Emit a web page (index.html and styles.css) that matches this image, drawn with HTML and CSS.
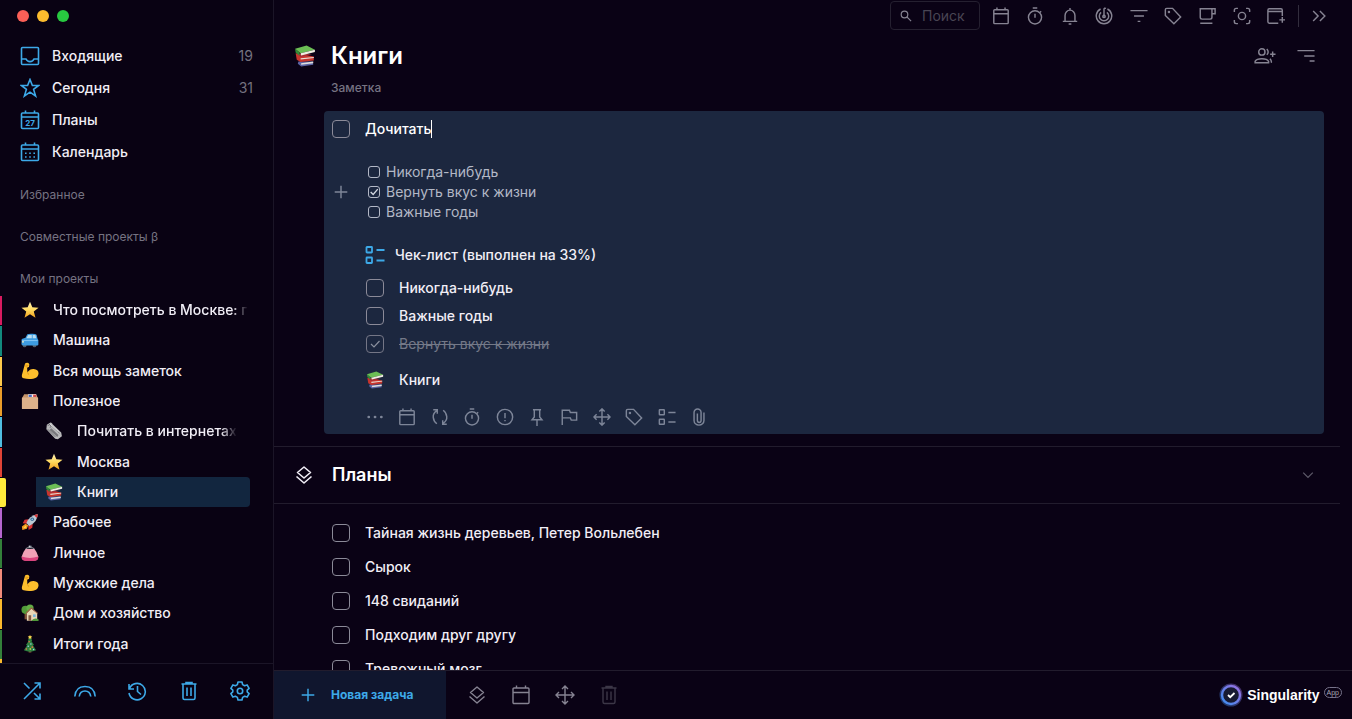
FILE: index.html
```html
<!DOCTYPE html>
<html lang="ru">
<head>
<meta charset="utf-8">
<title>Книги — Singularity</title>
<link rel="stylesheet" href="styles.css">
</head>
<body>
<svg class="sprite" aria-hidden="true">
  <defs>
    <linearGradient id="ring" x1="1" y1="0" x2="0" y2="1"><stop offset="0" stop-color="#9b6fe0"/><stop offset="1" stop-color="#3b8df0"/></linearGradient>
    <linearGradient id="gold" x1="0" y1="0" x2="0" y2="1"><stop offset="0" stop-color="#fff2b8"/><stop offset="0.5" stop-color="#ffd95e"/><stop offset="1" stop-color="#f2a01c"/></linearGradient>
  </defs>
  <symbol id="inbox" viewBox="0 0 20 20"><rect x="1.500" y="1.500" width="17" height="17" rx="1"/><path d="M1.500 13H6q1 2.600 4 2.600T14 13h4.500"/></symbol>
  <symbol id="star" viewBox="0 0 20 20"><path d="M10 1.500l2.400 6h6.200l-5 3.900 2 6.600-5.600-3.900L4.400 18l2-6.600-5-3.900h6.200z"/></symbol>
  <symbol id="month" viewBox="0 0 20 20"><rect x="1.500" y="3" width="17" height="15.500" rx="1"/><path d="M1.500 7h17M5.500.500V3M14.500.500V3"/><path stroke-dasharray="1.600 2.600" d="M5 11.300h11M5 15h11"/></symbol>
  <symbol id="calendar" viewBox="0 0 20 20"><rect x="2" y="3" width="16" height="15.500" rx="1"/><path d="M2 7.500h16M5.500.500V3M14.500.500V3"/></symbol>
  <symbol id="shuffle" viewBox="0 0 20 20"><path d="M2 18L18 2M12.500 2H18v5.500M2 2l5.500 5.500M12 12l6 6M12.500 18H18v-5.500"/></symbol>
  <symbol id="rainbow" viewBox="0 0 22 20"><path d="M.8 15.500C1.300 9 5 5.500 11 5.500s9.700 3.500 10.200 10M5.200 15.500c.5-3.500 2.500-5.500 5.800-5.500s5.300 2 5.800 5.500"/></symbol>
  <symbol id="history" viewBox="0 0 20 20"><path d="M2 3v5h5M2.500 7.500A8.200 8.200 0 1 1 2 12M10.500 5v5.500l3.500 3"/></symbol>
  <symbol id="trash" viewBox="0 0 20 20"><path d="M2.500 3h15M7 3V1.500h6V3M4 3v14q0 1.500 1.500 1.500h9q1.500 0 1.500-1.500V3M8 6.500v8.500M12 6.500v8.500"/></symbol>
  <symbol id="gear" viewBox="0 0 20 20"><path stroke-linejoin="round" d="M8 1h4l.6 2.600 2 1.100 2.500-.8 2 3.500-1.900 1.800v1.600l1.900 1.800-2 3.500-2.500-.8-2 1.100L12 19H8l-.6-2.600-2-1.100-2.500.8-2-3.500 1.900-1.800V9.200L.9 7.400l2-3.500 2.500.8 2-1.100z"/><circle cx="10" cy="10" r="2.700"/></symbol>
  <symbol id="search" viewBox="0 0 20 20"><circle cx="7.500" cy="7.500" r="5.500"/><path d="M11.500 11.500l7 7"/></symbol>
  <symbol id="timer" viewBox="0 0 20 20"><circle cx="10" cy="11.500" r="7.300"/><path d="M7.500 1.200h5M10 7.500v4.500M15.500 6l1.300-1.300"/></symbol>
  <symbol id="bell" viewBox="0 0 20 20"><path d="M2 16h16M4.500 16V9.500a5.500 6 0 0 1 11 0V16M10 1v2.500M8.500 18.800h3"/></symbol>
  <symbol id="focus" viewBox="0 0 20 20"><path d="M10 10.500V1.300M6.200 2.200a8.600 8.600 0 1 0 7.600 0M10 1.300q1.500 0 2.200.3M6.800 6a5.200 5.200 0 1 0 6.400 0"/><circle cx="10" cy="10.500" r="1.300"/></symbol>
  <symbol id="filter" viewBox="0 0 20 20"><path d="M.5 4h19M4.500 10h11M8.500 16h3"/></symbol>
  <symbol id="tag" viewBox="0 0 20 20"><path d="M1.500 3q0-1.500 1.500-1.500h6.500l9 9.500-7.500 7.500-9.500-9z"/><circle cx="5.500" cy="5.500" r=".6"/></symbol>
  <symbol id="cup" viewBox="0 0 20 20"><path d="M2.500 2h13v9.500q0 2-2 2h-9q-2 0-2-2zM15.500 2H19v5.500h-3.500M2.500 18H16"/></symbol>
  <symbol id="capture" viewBox="0 0 20 20"><path d="M1.500 5.500v-2q0-2 2-2h2M14.500 1.500h2q2 0 2 2v2M18.500 14.500v2q0 2-2 2h-2M5.500 18.500h-2q-2 0-2-2v-2"/><circle cx="10" cy="10" r="4"/></symbol>
  <symbol id="windowplus" viewBox="0 0 20 20"><path d="M12.500 18H2.500Q1 18 1 16.500v-13Q1 2 2.500 2h13Q17 2 17 3.500V10M1 5h16M17 11v6.500M13.700 14.300h6.300"/></symbol>
  <symbol id="chevrons" viewBox="0 0 20 20"><path d="M3.500 4.500l5.500 5.500-5.500 5.500M11 4.500l5.500 5.500-5.500 5.500"/></symbol>
  <symbol id="people" viewBox="0 0 24 20"><circle cx="8.500" cy="5.500" r="3.500"/><path d="M1 17.500v-1.500c2-4 13-4 15 0v1.500zM14 2.200q3 3.300 0 6.500M17.500 13q2 2 1.500 4.500M20.500 5v6M17.700 8h6"/></symbol>
  <symbol id="sort" viewBox="0 0 20 20"><path d="M.5 4h19M8 10h11.500M14 15.500h5.500"/></symbol>
  <symbol id="plus" viewBox="0 0 20 20"><path d="M10 3v14M3 10h14"/></symbol>
  <symbol id="checklist" viewBox="0 0 20 20"><rect x="1.500" y="2" width="5.500" height="5.500" rx=".5"/><rect x="1.500" y="12.500" width="5.500" height="5.500" rx=".5"/><path d="M11.500 5H19.500M11.500 15.500h8"/></symbol>
  <symbol id="dots" viewBox="0 0 20 20"><path stroke-width="3" stroke-linecap="round" d="M3 10h.1M10 10h.1M17 10h.1"/></symbol>
  <symbol id="repeat" viewBox="0 0 20 20"><path d="M2.500 2H7v4.500M6.500 3Q2 6 2.500 10.500 3 15 6.500 17.500M17.500 18H13v-4.500M13.500 17q4.500-3 4-7.500Q17 5 13.500 2.500"/></symbol>
  <symbol id="alert" viewBox="0 0 20 20"><circle cx="10" cy="10" r="8.500"/><path d="M10 5.500v6M10 13.300v1.500"/></symbol>
  <symbol id="pin" viewBox="0 0 20 20"><path d="M5.500 2h9M7 2v8l-2.500 3h11L13 10V2M10 13v7"/></symbol>
  <symbol id="flag" viewBox="0 0 20 20"><path d="M2.500 19V2.500h8l1 2.500h7v8.500h-6l-1-2.500h-9"/></symbol>
  <symbol id="move" viewBox="0 0 20 20"><path d="M10 1v18M1 10h18M7 4l3-3 3 3M7 16l3 3 3-3M4 7l-3 3 3 3M16 7l3 3-3 3"/></symbol>
  <symbol id="clip" viewBox="0 0 20 20"><path d="M15.500 5v9a5.500 5 0 0 1-11 0V5a3.800 3.800 0 0 1 7.800 0v9a2 2 0 0 1-4.100 0V6"/></symbol>
  <symbol id="layers" viewBox="0 0 20 20"><path stroke-linejoin="round" d="M10 2l6.500 5.500L10 13 3.500 7.500zM2.500 11.500l7.500 6.500 7.500-6.500"/></symbol>
  <symbol id="down" viewBox="0 0 20 20"><path d="M4 7l6 6 6-6"/></symbol>

  <symbol id="e-star" viewBox="0 0 20 20"><path fill="url(#gold)" d="M10 .8l2.600 6.200 6.900.4-5.300 4.300 1.900 6.900L10 14.700l-6.100 3.900 1.900-6.900L.5 7.400 7.400 7z"/></symbol>
  <symbol id="e-car" viewBox="0 0 20 20"><circle cx="4" cy="16" r="2.100" fill="#555b63"/><circle cx="15" cy="16" r="2.100" fill="#555b63"/><path fill="#3d9be0" d="M.8 9L5 7.500l2-4Q8 2.800 12.500 3q4 0 4.800 1.300L18.500 9l.8 1v5q0 1.200-1.500 1.200H2q-1.500-.5-1.500-2z"/><path fill="#b9dcf0" d="M6 8l2-3.500h4V8zM13 4.500h3L17 8h-4z"/><path fill="#7ec3f2" d="M1 10h17.500v1.200H1z"/><circle cx="2.200" cy="12" r="1" fill="#fff4c0"/></symbol>
  <symbol id="e-arm" viewBox="0 0 20 20"><path fill="#fdbf2d" d="M4.500 1.800Q6 .5 8.300 1.200l1 1.600-.5 2.700-2 .7.300 5.300q2.700-4 7-3.700 5.200.6 5.400 4.700-.2 5.300-6 6-6 .7-10.500-.4Q.5 17.700 1 14.500z"/><path fill="none" stroke="#d98b12" stroke-width=".9" d="M7 11.500q1 1 1.300 2.500M4.800 3.400l3.400.5M5 5l2.500.8"/></symbol>
  <symbol id="e-box" viewBox="0 0 20 20"><path fill="#c6946a" d="M3.500 2.500h13L19 7H1z"/><rect x="1" y="6" width="18" height="13" rx=".8" fill="#ddb18a"/><path fill="#f4efec" d="M8 2.500h9v3.200H8z"/><path fill="#4467c0" d="M8.500 3h3.500v2.500H8.500z"/><path fill="#d34545" d="M13.500 3H17v2.500h-3.500z"/></symbol>
  <symbol id="e-news" viewBox="0 0 20 20"><path fill="#b8b8ba" d="M2 3l4-2.500q2 0 2.500 2l9.500 9.200.8 4-4.500 3.500-3-.7L1.500 8z"/><path fill="#77777b" d="M7 7l8 7.500-1.300 2.200L5 9z"/><path fill="none" stroke="#55555a" stroke-width=".8" d="M3 4.500q1.500-2.500 3-1.500 1.500 2-.5 3.500M7.500 4.500l8.500 8M3 8l8.500 8.500"/><path stroke="#eee" d="M5.500 2l9.500 9"/></symbol>
  <symbol id="e-books" viewBox="0 0 20 20"><path fill="#5b63a4" d="M4 15l13 0 .5 3-11 1.500L3.500 17z"/><path fill="#ddd" d="M6.500 16.500l11-1.500v1.700l-11 1.300z"/><path fill="#c7352e" d="M1.500 7.500L5 8l13 2.500v3.500l-12 1.500-3.500-2z"/><path fill="#e9dfd5" d="M6 12l12-1.200v1L6 13.200z"/><path fill="#a62c35" d="M2.500 8l14 .5L6 11z"/><path fill="#328c38" d="M1 3.500l4 3.300v3l-3.500-3z"/><path fill="#6cbe55" d="M1 3.500L11.500.5 19 4.300 6 7.500z"/><path fill="#f0eee1" d="M6 7.500l13-3.200v2L6.500 9.500z"/></symbol>
  <symbol id="e-rocket" viewBox="0 0 20 20"><path fill="#f39a20" d="M5 12L1 15l.5 4 5-1.500 1.500-4z"/><path fill="#ffdf4f" d="M5 14l-2.500 3 3.500-1z"/><path fill="#d83435" d="M8 7L4 7.500 2 11.500l5 .5zM13 12l-.5 4.500-4 2.500-.5-5z"/><path fill="#bac8d3" d="M6 11q3-8 12.500-10 .5 8-9.500 13.500z"/><path fill="#d83435" d="M14.500 2.500l4-1.500q.2 2.300-.9 4.500z"/><circle cx="12.500" cy="7" r="2" fill="#38658f"/><circle cx="12.500" cy="7" r="1" fill="#8ac7e9"/></symbol>
  <symbol id="e-purse" viewBox="0 0 20 20"><path fill="#f0a2b7" d="M5 5.500h10q3 3.500 4.200 8.500.3 4.500-5 4.500H5.800q-5.500 0-5-4.500Q2 9 5 5.500z"/><path fill="#d9447d" d="M.8 14q9 3 18.400 0 .3 5-5 5H5.800q-5.500 0-5-5z"/><path fill="none" stroke="#b4bdc4" stroke-width="1" d="M5 5.500Q6 4 10 4t5 1.500"/><circle cx="9.300" cy="2.700" r=".9" fill="#ccd3d8"/><circle cx="10.900" cy="2.700" r=".9" fill="#96a1aa"/></symbol>
  <symbol id="e-house" viewBox="0 0 20 20"><path fill="#835337" d="M4 9h2.500v8H4z"/><circle cx="5" cy="6.500" r="4.500" fill="#529a3a"/><circle cx="10" cy="4.500" r="4" fill="#63ad45"/><path fill="#e8d6b5" d="M6.500 10l5-5 6.500 5v8.500H6.500z"/><path fill="none" stroke="#9b6044" stroke-width="1.200" d="M5.500 10.500l6-6 7 6"/><path fill="#815a43" d="M8.300 12.500h3v6h-3z"/><path fill="#79b8dc" d="M13.300 11.500h3v3h-3z"/><path fill="#4f9839" d="M12 18q3-3 7.500-1v2H12z"/></symbol>
  <symbol id="e-tree" viewBox="0 0 20 20"><path fill="#835337" d="M8.500 16h3v3.500h-3z"/><path fill="#2f8140" d="M10 1.500l2.500 5-1 .3 3 4.400-1.300.3 3.600 5.500q-7 3-13.600 0l3.600-5.500-1.300-.3 3-4.400-1-.3z"/><path fill="#ffdb50" d="M10 0l.8 1.500 1.700.2-1.200 1.200.3 1.600-1.600-.8-1.600.8.3-1.600-1.200-1.200 1.700-.2z"/><g fill="#f3744a"><circle cx="9" cy="7.500" r=".9"/><circle cx="12.500" cy="13.500" r=".9"/><circle cx="6" cy="15.500" r=".9"/></g><g fill="#9cdef4"><circle cx="11" cy="10" r=".8"/><circle cx="8" cy="12.500" r=".8"/><circle cx="14" cy="16.200" r=".8"/></g><circle cx="10.300" cy="15.500" r=".9" fill="#ffdf53"/></symbol>
</svg>

<div class="app">
  <aside class="sidebar">
    <div class="lights"><i class="light red"></i><i class="light amber"></i><i class="light green"></i></div>
    <nav class="views">
      <a href="#inbox"><svg class="icon"><use href="#inbox"/></svg><span>Входящие</span><b>19</b></a>
      <a href="#today"><svg class="icon"><use href="#star"/></svg><span>Сегодня</span><b>31</b></a>
      <a href="#plans"><svg class="icon" viewBox="0 0 20 20"><rect x="1.500" y="3" width="17" height="15.500" rx="1"/><path d="M1.500 7h17M5.500.500V3M14.500.500V3"/><text x="10" y="16" text-anchor="middle">27</text></svg><span>Планы</span></a>
      <a href="#cal"><svg class="icon"><use href="#month"/></svg><span>Календарь</span></a>
    </nav>
    <h2 class="group">Избранное</h2>
    <h2 class="group">Совместные проекты β</h2>
    <h2 class="group last">Мои проекты</h2>
    <nav class="projects">
      <a class="project c-pink fade" href="#p1"><svg class="emoji"><use href="#e-star"/></svg><span>Что посмотреть в Москве: г</span></a>
      <a class="project c-teal" href="#p2"><svg class="emoji"><use href="#e-car"/></svg><span>Машина</span></a>
      <a class="project c-yellow" href="#p3"><svg class="emoji"><use href="#e-arm"/></svg><span>Вся мощь заметок</span></a>
      <a class="project c-orange" href="#p4"><svg class="emoji"><use href="#e-box"/></svg><span>Полезное</span></a>
      <a class="project nested c-cyan fade" href="#p5"><svg class="emoji"><use href="#e-news"/></svg><span>Почитать в интернетах</span></a>
      <a class="project nested c-red" href="#p6"><svg class="emoji"><use href="#e-star"/></svg><span>Москва</span></a>
      <a class="project nested selected c-lemon" href="#p7"><svg class="emoji"><use href="#e-books"/></svg><span>Книги</span></a>
      <a class="project c-purple" href="#p8"><svg class="emoji"><use href="#e-rocket"/></svg><span>Рабочее</span></a>
      <a class="project c-green" href="#p9"><svg class="emoji"><use href="#e-purse"/></svg><span>Личное</span></a>
      <a class="project c-salmon" href="#p10"><svg class="emoji"><use href="#e-arm"/></svg><span>Мужские дела</span></a>
      <a class="project c-amber" href="#p11"><svg class="emoji"><use href="#e-house"/></svg><span>Дом и хозяйство</span></a>
      <a class="project c-green" href="#p12"><svg class="emoji"><use href="#e-tree"/></svg><span>Итоги года</span></a>
      <div class="more c-amber"></div>
    </nav>
    <div class="side-tools">
      <button aria-label="Перемешать"><svg class="icon"><use href="#shuffle"/></svg></button>
      <button aria-label="Привычки"><svg class="icon wide"><use href="#rainbow"/></svg></button>
      <button aria-label="История"><svg class="icon"><use href="#history"/></svg></button>
      <button aria-label="Корзина"><svg class="icon"><use href="#trash"/></svg></button>
      <button aria-label="Настройки"><svg class="icon"><use href="#gear"/></svg></button>
    </div>
  </aside>

  <main class="main">
    <header class="topbar">
      <label class="search"><svg class="icon tiny"><use href="#search"/></svg><input type="text" placeholder="Поиск" aria-label="Поиск"></label>
      <div class="top-icons">
        <button aria-label="Календарь"><svg class="icon"><use href="#calendar"/></svg></button>
        <button aria-label="Таймер"><svg class="icon"><use href="#timer"/></svg></button>
        <button aria-label="Уведомления"><svg class="icon"><use href="#bell"/></svg></button>
        <button aria-label="Фокус"><svg class="icon"><use href="#focus"/></svg></button>
        <button aria-label="Фильтр"><svg class="icon"><use href="#filter"/></svg></button>
        <button aria-label="Теги"><svg class="icon"><use href="#tag"/></svg></button>
        <button aria-label="Перерыв"><svg class="icon"><use href="#cup"/></svg></button>
        <button aria-label="Снимок"><svg class="icon"><use href="#capture"/></svg></button>
        <button aria-label="Новое окно"><svg class="icon"><use href="#windowplus"/></svg></button>
      </div>
      <i class="divider"></i>
      <button aria-label="Ещё"><svg class="icon"><use href="#chevrons"/></svg></button>
    </header>

    <div class="page">
      <div class="title-row">
        <svg class="emoji big"><use href="#e-books"/></svg>
        <h1>Книги</h1>
        <button aria-label="Поделиться"><svg class="icon wide"><use href="#people"/></svg></button>
        <button aria-label="Сортировка"><svg class="icon"><use href="#sort"/></svg></button>
      </div>
      <p class="note">Заметка</p>

      <section class="card">
        <div class="task-title">
          <input type="checkbox" aria-label="Выполнить">
          <input class="title-input" type="text" size="8" value="Дочитать" aria-label="Название"><i class="caret"></i>
        </div>
        <div class="memo">
          <button class="add" aria-label="Добавить"><svg class="icon"><use href="#plus"/></svg></button>
          <div class="memo-list">
            <label><input type="checkbox">Никогда-нибудь</label>
            <label><input type="checkbox" checked>Вернуть вкус к жизни</label>
            <label><input type="checkbox">Важные годы</label>
          </div>
        </div>
        <div class="card-body">
          <h3 class="check-head"><svg class="icon blue"><use href="#checklist"/></svg>Чек-лист (выполнен на 33%)</h3>
          <div class="checks">
            <label><input type="checkbox">Никогда-нибудь</label>
            <label><input type="checkbox">Важные годы</label>
            <label class="done"><input type="checkbox" checked><s>Вернуть вкус к жизни</s></label>
          </div>
          <div class="project-link"><svg class="emoji"><use href="#e-books"/></svg>Книги</div>
          <div class="task-tools">
            <button aria-label="Ещё"><svg class="icon"><use href="#dots"/></svg></button>
            <button aria-label="Дата"><svg class="icon"><use href="#calendar"/></svg></button>
            <button aria-label="Повтор"><svg class="icon"><use href="#repeat"/></svg></button>
            <button aria-label="Таймер"><svg class="icon"><use href="#timer"/></svg></button>
            <button aria-label="Приоритет"><svg class="icon"><use href="#alert"/></svg></button>
            <button aria-label="Закрепить"><svg class="icon"><use href="#pin"/></svg></button>
            <button aria-label="Флаг"><svg class="icon"><use href="#flag"/></svg></button>
            <button aria-label="Переместить"><svg class="icon"><use href="#move"/></svg></button>
            <button aria-label="Тег"><svg class="icon"><use href="#tag"/></svg></button>
            <button aria-label="Чек-лист"><svg class="icon"><use href="#checklist"/></svg></button>
            <button aria-label="Файл"><svg class="icon"><use href="#clip"/></svg></button>
          </div>
        </div>
      </section>

      <div class="section-head">
        <svg class="icon"><use href="#layers"/></svg>
        <h2>Планы</h2>
        <button aria-label="Свернуть"><svg class="icon small"><use href="#down"/></svg></button>
      </div>
      <div class="tasks">
        <label><input type="checkbox">Тайная жизнь деревьев, Петер Вольлебен</label>
        <label><input type="checkbox">Сырок</label>
        <label><input type="checkbox">148 свиданий</label>
        <label><input type="checkbox">Подходим друг другу</label>
        <label><input type="checkbox">Тревожный мозг</label>
      </div>
    </div>

    <footer class="bottom">
      <button class="new-task"><svg class="icon"><use href="#plus"/></svg>Новая задача</button>
      <div class="bottom-icons">
        <button aria-label="Раздел"><svg class="icon"><use href="#layers"/></svg></button>
        <button aria-label="Дата"><svg class="icon"><use href="#calendar"/></svg></button>
        <button aria-label="Переместить"><svg class="icon"><use href="#move"/></svg></button>
        <button aria-label="Удалить" disabled><svg class="icon"><use href="#trash"/></svg></button>
      </div>
      <div class="brand">
        <svg class="logo" viewBox="0 0 24 24"><circle cx="12" cy="12" r="9.500" fill="#15172e" stroke="url(#ring)" stroke-width="4" opacity=".4"/><circle cx="12" cy="12" r="9" fill="#171a33" stroke="url(#ring)" stroke-width="2.400"/><path d="M9 12l2.200 2.200L15.500 10" fill="none" stroke="#fff" stroke-width="1.800"/></svg>
        <strong>Singularity</strong><span class="pill">App</span>
      </div>
    </footer>
  </main>
</div>
</body>
</html>
```
FILE: styles.css
```css
* { box-sizing: border-box; }
body {
  margin: 0;
  background: #0a0215;
  color: #f1eef6;
  font: 500 14px/20px Inter, "Noto Sans", sans-serif;
}
h1, h2, h3, p { margin: 0; font-weight: 500; }
a { color: inherit; text-decoration: none; }
button {
  display: flex;
  align-items: center;
  justify-content: center;
  padding: 0;
  border: 0;
  background: none;
  color: inherit;
  font: inherit;
}
.sprite { position: absolute; width: 0; height: 0; }
.icon {
  flex: none;
  width: 18px;
  height: 18px;
  fill: none;
  stroke: currentColor;
  stroke-width: 1.6;
  overflow: visible;
}
.icon text {
  fill: currentColor;
  stroke: none;
  font: 700 8px Inter, sans-serif;
}
.emoji { flex: none; width: 18px; height: 18px; }

.app {
  display: grid;
  grid-template-columns: 274px 1fr;
  height: 100vh;
  overflow: hidden;
}

/* Sidebar */
.sidebar {
  display: flex;
  flex-direction: column;
  min-height: 0;
  border-right: 1px solid #1b1527;
  background: #090213;
}
.lights { display: flex; gap: 8px; padding: 10px 17px 18px; }
.light { width: 12px; height: 12px; border-radius: 50%; }
.red { background: #fb5f57; }
.light.amber { background: #fcbc2e; }
.green { background: #28c840; }
.views { display: grid; padding-bottom: 7px; }
.views a {
  display: flex;
  align-items: center;
  gap: 12px;
  height: 32px;
  padding: 0 20px;
}
.views .icon { width: 20px; height: 20px; color: #3da9e8; }
.views span { flex: 1; }
.views b { color: #74717f; font-weight: 400; }
.group {
  height: 42px;
  padding: 10px 20px;
  color: #767382;
  font-size: 12px;
  font-weight: 400;
  line-height: 20px;
}
.group.last { height: 36px; }
.projects {
  display: flex;
  flex: 1;
  flex-direction: column;
  min-height: 0;
}
.project {
  display: flex;
  flex: 1;
  align-items: center;
  gap: 14px;
  min-height: 30px;
  max-height: 32px;
  padding-right: 20px;
  margin-right: 23px;
}
.project::before {
  content: "";
  align-self: stretch;
  width: 2px;
  margin: 1px 5px 0 0;
  background: var(--bar);
}
.project span { overflow: hidden; white-space: nowrap; }
.project.fade { padding-right: 2px; }
.project.fade span { mask-image: linear-gradient(to right, #000 calc(100% - 16px), transparent); }
.project.nested::before { margin-right: 29px; }
.project.selected::before { width: 6px; margin-right: 25px; border-radius: 0 2px 2px 0; }
.project.selected {
  border-radius: 4px;
  background: linear-gradient(#12263f, #12263f) right / calc(100% - 36px) 100% no-repeat;
}
.more { flex: none; width: 2px; height: 4px; background: var(--bar); }
.c-pink { --bar: #d81b60; }
.c-teal { --bar: #12897d; }
.c-yellow { --bar: #fdc94b; }
.c-orange { --bar: #eb9d2a; }
.c-cyan { --bar: #4fbde0; }
.c-red { --bar: #e04336; }
.c-lemon { --bar: #ffeb3b; }
.c-purple { --bar: #b565cf; }
.c-green { --bar: #33803a; }
.c-salmon { --bar: #f28b7b; }
.c-amber { --bar: #fbb92d; }
.side-tools {
  display: flex;
  justify-content: space-between;
  height: 56px;
  padding: 0 23px 2px 22px;
  border-top: 1px solid #1b1527;
  color: #3da9e8;
}
.side-tools .icon { width: 20px; height: 20px; }
.side-tools .wide { width: 22px; }

/* Main column */
.main { display: flex; flex-direction: column; min-width: 0; min-height: 0; }
.topbar {
  display: flex;
  align-items: center;
  justify-content: flex-end;
  height: 31px;
  padding-right: 24px;
  color: #868392;
}
.search {
  display: flex;
  align-items: center;
  gap: 10px;
  width: 90px;
  height: 29px;
  padding: 0 9px;
  border: 1px solid #252030;
  border-radius: 4px;
}
.tiny { width: 12px; height: 12px; stroke-width: 2; }
.search input {
  flex: 1;
  min-width: 0;
  padding: 0;
  border: 0;
  outline: 0;
  background: none;
  font: inherit;
  color: inherit;
}
.search input::placeholder { color: #494553; font-weight: 400; }
.top-icons { display: flex; justify-content: space-between; width: 293px; margin: 0 13px 0 12px; }
.divider { width: 1px; height: 22px; margin-right: 11px; background: #322d3d; }
.page { flex: 1; min-height: 0; padding: 0 12px 0 0; overflow: hidden; }
.title-row {
  display: flex;
  align-items: center;
  height: 50px;
  padding: 0 25px 0 20px;
  color: #868392;
}
.emoji.big { width: 22px; height: 22px; margin-right: 15px; }
h1 { flex: 1; color: #fff; font-size: 24px; font-weight: 600; }
.title-row .icon { margin-left: 21px; }
.title-row .wide { width: 22px; }
.note { padding-left: 57px; color: #767382; font-size: 12px; line-height: 14px; }
.card {
  margin: 16px 16px 12px 50px;
  padding: 7px 8px 5px;
  border-radius: 4px;
  background: #1c273f;
}
input[type="checkbox"] {
  flex: none;
  width: 18px;
  height: 18px;
  margin: 0;
  appearance: none;
  border: 1px solid #8b8a98;
  border-radius: 4px;
}
.task-title { display: flex; align-items: center; height: 22px; }
.title-input {
  field-sizing: content;
  margin-left: 15px;
  padding: 0;
  border: 0;
  outline: 0;
  background: none;
  color: #fff;
  font: inherit;
}
.caret { width: 1px; height: 18px; background: #fff; }
.memo { display: flex; align-items: center; margin-top: 22px; color: #b3b8c6; font-weight: 400; }
.add { width: 18px; margin-right: 18px; color: #7f8799; }
.memo label { display: flex; align-items: center; gap: 6px; height: 20px; }
.memo input[type="checkbox"] { width: 12px; height: 12px; border-color: #b3b8c6; border-radius: 3px; }
.memo input:checked, .checks input:checked {
  background: center / 100% no-repeat url("data:image/svg+xml,%3Csvg xmlns='http://www.w3.org/2000/svg' viewBox='0 0 12 12'%3E%3Cpath d='M2 6l3 3L10.500 2.500' fill='none' stroke='%23d3d7e0' stroke-width='1.600'/%3E%3C/svg%3E");
}
.card-body { padding-left: 34px; }
.check-head {
  display: flex;
  align-items: center;
  gap: 10px;
  height: 24px;
  margin: 21px 0 7px;
  font-size: 14px;
}
.check-head .icon { width: 20px; height: 20px; margin-left: -1px; stroke-width: 1.8; }
.blue { color: #3da9e8; }
.checks label, .project-link { display: flex; align-items: center; gap: 15px; height: 28px; }
.checks input:checked {
  background-image: url("data:image/svg+xml,%3Csvg xmlns='http://www.w3.org/2000/svg' viewBox='0 0 16 16'%3E%3Cpath d='M4 8l3 3 5.500-6' fill='none' stroke='%23a5a9b5' stroke-width='1.200'/%3E%3C/svg%3E");
}
.checks .done { color: #747988; font-weight: 400; }
.checks .done input { opacity: .8; }
.project-link { height: 24px; margin: 10px 0 13px; }
.task-tools { display: flex; justify-content: space-between; width: 342px; height: 24px; color: #7d8598; }
.section-head {
  display: flex;
  align-items: center;
  height: 58px;
  padding: 0 25px 0 20px;
  border: solid #221c2d;
  border-width: 1px 0;
}
.section-head .icon { width: 20px; height: 20px; }
.section-head h2 { flex: 1; margin-left: 18px; color: #fff; font-size: 18px; font-weight: 600; }
.section-head .small { width: 16px; height: 16px; color: #5d5968; }
.section-head button { width: 14px; }
.tasks { padding: 12px 0 0 58px; }
.tasks label { display: flex; align-items: center; gap: 15px; height: 34px; }

/* Bottom bar */
.bottom { display: flex; height: 49px; border-top: 1px solid #221c2d; color: #868392; }
.new-task {
  justify-content: flex-start;
  gap: 14px;
  width: 172px;
  padding-left: 25px;
  background: #10162e;
  color: #3da9e8;
  font-size: 12px;
  font-weight: 700;
}
.bottom-icons { display: flex; gap: 24px; margin-left: 21px; }
.bottom-icons .icon { width: 20px; height: 20px; stroke-width: 1.4; }
.bottom-icons button:disabled { color: #3c3747; }
.brand { display: flex; align-items: center; margin-left: auto; padding-right: 10px; color: #fff; }
.logo { width: 24px; height: 24px; margin-right: 4px; }
.brand strong { font: 700 14px/20px "Liberation Sans", Arial, sans-serif; }
.pill {
  margin: 0 0 5px 4px;
  padding: 0 2px;
  border: 1px solid #77738a;
  border-radius: 6px;
  color: #a9a6b4;
  font: 400 7px/9px "Liberation Sans", Arial, sans-serif;
}
```
